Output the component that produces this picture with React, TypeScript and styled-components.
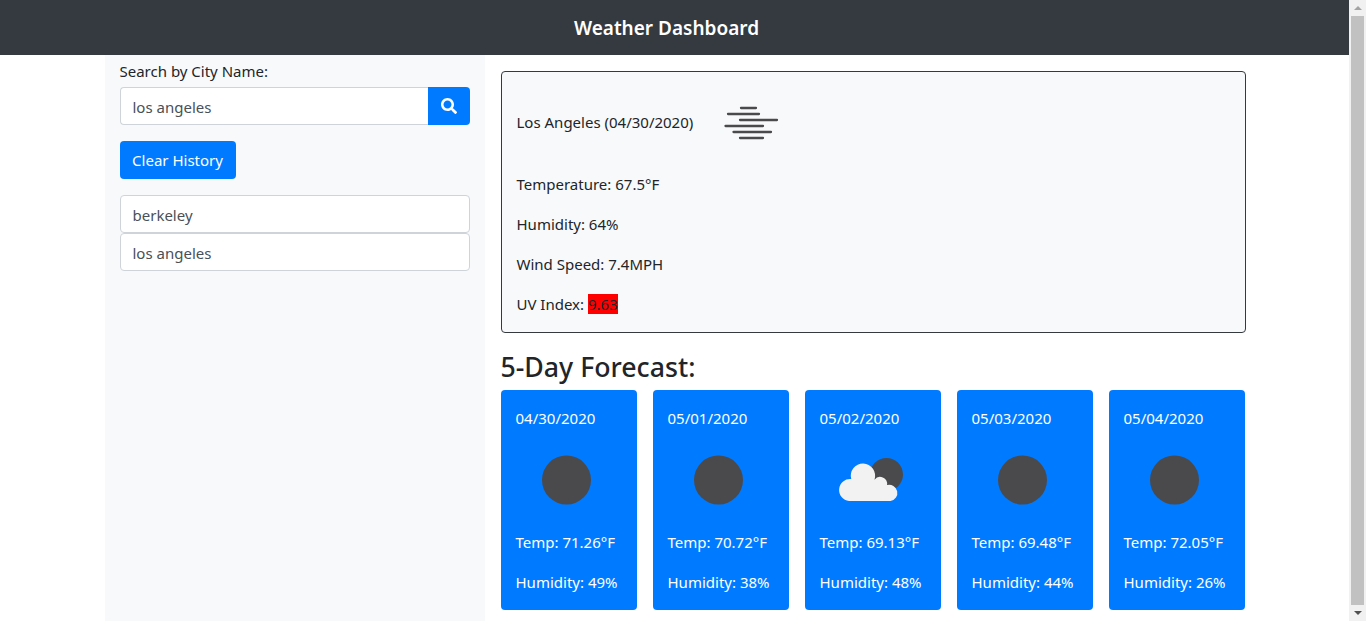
import styled, { createGlobalStyle } from "styled-components";
import { FaSearch } from "react-icons/fa";

const GlobalStyle = createGlobalStyle`
    html {
        overflow: hidden;
    }
    body {
        margin: 0;
        padding-right: 17px;
        background: #fff;
        color: #212529;
        font-family: "Noto Sans", "Liberation Sans", sans-serif;
        font-size: 15px;
        line-height: 24px;
    }
    * {
        box-sizing: border-box;
    }
`;

const Navbar = styled.header`
    height: 55px;
    background: #343a40;
    display: flex;
    align-items: center;
    justify-content: center;
    padding-right: 16px;
`;

const Brand = styled.h1`
    margin: 0;
    color: #fff;
    font-size: 19px;
    font-weight: 600;
    line-height: 30px;
`;

const Container = styled.div`
    width: 1140px;
    margin: 0 auto;
    display: flex;
    align-items: stretch;
`;

const Sidebar = styled.aside`
    width: 380px;
    background: #f8f9fa;
    padding: 4px 15px 0;
`;

const Label = styled.label`
    display: block;
    margin-bottom: 4px;
`;

const InputGroup = styled.div`
    display: flex;
    height: 38px;
    margin-bottom: 16px;
`;

const CityInput = styled.input`
    flex: 1;
    min-width: 0;
    padding: 7px 12px 5px;
    border: 1px solid #ced4da;
    border-right: none;
    border-radius: 4px 0 0 4px;
    background: #fff;
    color: #495057;
    font: inherit;
`;

const SearchButton = styled.button`
    width: 42px;
    border: none;
    border-radius: 0 4px 4px 0;
    background: #007bff;
    color: #fff;
    font-size: 16px;
    display: flex;
    align-items: center;
    justify-content: center;
`;

const ClearButton = styled.button`
    display: block;
    height: 38px;
    width: 116px;
    padding: 0;
    margin-bottom: 16px;
    border: none;
    border-radius: 4px;
    background: #007bff;
    color: #fff;
    font: inherit;
`;

const HistoryItem = styled.div`
    height: 38px;
    padding: 7px 12px 5px;
    border: 1px solid #ced4da;
    border-radius: 4px;
    background: #fff;
    color: #495057;
`;

const Main = styled.main`
    width: 760px;
    padding: 16px 0 16px 16px;
`;

const CurrentCard = styled.section`
    width: 745px;
    height: 262px;
    padding: 0 15px;
    margin-bottom: 17px;
    background: #f8f9fa;
    border: 1px solid #343a40;
    border-radius: 4px;
`;

const CurrentTitle = styled.div`
    height: 100px;
    display: flex;
    align-items: center;
    svg {
        margin-top: 1px;
    }
`;

const CityName = styled.span`
    width: 205px;
`;

const Stat = styled.p`
    margin: 0 0 16px;
    &:last-child {
        margin-bottom: 0;
    }
`;

const UvBadge = styled.span`
    background: #ff0000;
`;

const ForecastTitle = styled.h2`
    margin: 0 0 6px;
    font-size: 26.7px;
    font-weight: 500;
    line-height: 34px;
`;

const ForecastRow = styled.div`
    display: flex;
    gap: 16px;
`;

const DayCard = styled.div`
    width: 136px;
    height: 220px;
    padding: 16px 15px;
    border-radius: 4px;
    background: #007bff;
    color: #fff;
`;

const DayIcon = styled.svg`
    display: block;
    width: 100px;
    height: 100px;
    margin-left: 3px;
`;

const DayStat = styled.p`
    margin: 0 0 16px;
    &:last-child {
        margin-bottom: 0;
    }
`;

function FogIcon() {
    return (
        <svg width="60" height="40" viewBox="0 0 60 40" fill="none" stroke="#4a4a4c" strokeWidth="2.3" strokeLinecap="round">
            <path d="M19 5h15M6 11h31M18 17h37M3.500 23h37.500M11.500 29h37.500M18 35h23" />
        </svg>
    );
}

function ClearIcon() {
    return (
        <DayIcon viewBox="0 0 100 100">
            <circle cx="47.5" cy="50" r="24.5" fill="#4a4a4c" />
        </DayIcon>
    );
}

function CloudIcon() {
    return (
        <DayIcon viewBox="0 0 100 100">
            <circle cx="63.5" cy="44.5" r="16.5" fill="#4a4a4c" />
            <path
                d="M26 71A11 11 0 1 1 28.200 49.100A12.200 12.200 0 1 1 51.500 49.700A7 7 0 0 1 64 55A8.200 8.200 0 1 1 67.500 71Z"
                fill="#f2f2f2"
            />
        </DayIcon>
    );
}

const ScrollTrack = styled.div`
    position: fixed;
    top: 0;
    right: 0;
    bottom: 0;
    width: 17px;
    background: #f1f1f1;
    display: flex;
    flex-direction: column;
    align-items: center;
    justify-content: space-between;
`;

const ScrollArrow = styled.div<{ $down?: boolean }>`
    flex: none;
    height: 16px;
    width: 100%;
    display: flex;
    align-items: center;
    justify-content: center;
    &::before {
        content: "";
        border-left: 4px solid transparent;
        border-right: 4px solid transparent;
        ${(props) =>
            props.$down
                ? "border-top: 4px solid #505050;"
                : "border-bottom: 4px solid #a3a3a3;"}
    }
`;

const ScrollThumb = styled.div`
    flex: 1;
    margin: 0 2px;
    width: 13px;
    background: #c1c1c1;
`;

interface IDay {
    date: string;
    temp: string;
    humidity: string;
    cloudy?: boolean;
}

const days: IDay[] = [
    { date: "04/30/2020", temp: "71.26", humidity: "49" },
    { date: "05/01/2020", temp: "70.72", humidity: "38" },
    { date: "05/02/2020", temp: "69.13", humidity: "48", cloudy: true },
    { date: "05/03/2020", temp: "69.48", humidity: "44" },
    { date: "05/04/2020", temp: "72.05", humidity: "26" },
];

function App() {
    return (
        <>
            <GlobalStyle />
            <Navbar>
                <Brand>Weather Dashboard</Brand>
            </Navbar>
            <Container>
                <Sidebar>
                    <Label htmlFor="city">Search by City Name:</Label>
                    <InputGroup>
                        <CityInput id="city" defaultValue="los angeles" />
                        <SearchButton aria-label="Search">
                            <FaSearch />
                        </SearchButton>
                    </InputGroup>
                    <ClearButton>Clear History</ClearButton>
                    <HistoryItem>berkeley</HistoryItem>
                    <HistoryItem>los angeles</HistoryItem>
                </Sidebar>
                <Main>
                    <CurrentCard>
                        <CurrentTitle>
                            <CityName>Los Angeles (04/30/2020)</CityName>
                            <FogIcon />
                        </CurrentTitle>
                        <Stat>Temperature: 67.5°F</Stat>
                        <Stat>Humidity: 64%</Stat>
                        <Stat>Wind Speed: 7.4MPH</Stat>
                        <Stat>
                            UV Index: <UvBadge>9.63</UvBadge>
                        </Stat>
                    </CurrentCard>
                    <ForecastTitle>5-Day Forecast:</ForecastTitle>
                    <ForecastRow>
                        {days.map((day) => (
                            <DayCard key={day.date}>
                                <div>{day.date}</div>
                                {day.cloudy ? <CloudIcon /> : <ClearIcon />}
                                <DayStat>Temp: {day.temp}°F</DayStat>
                                <DayStat>Humidity: {day.humidity}%</DayStat>
                            </DayCard>
                        ))}
                    </ForecastRow>
                </Main>
            </Container>
            <ScrollTrack>
                <ScrollArrow />
                <ScrollThumb />
                <ScrollArrow $down />
            </ScrollTrack>
        </>
    );
}

export default App;
